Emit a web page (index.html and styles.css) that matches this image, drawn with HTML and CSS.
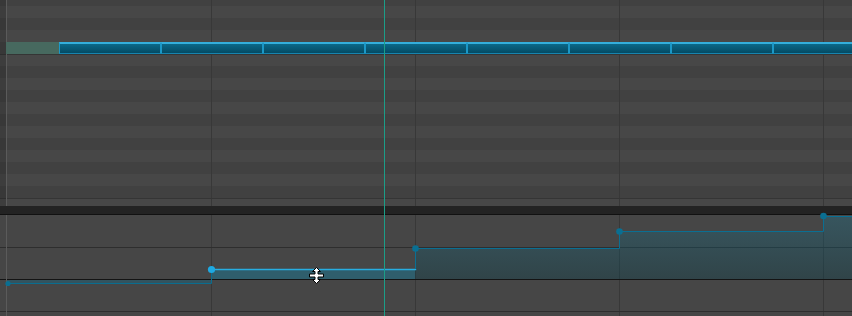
FILE: index.html
```html
<!DOCTYPE html>
<html lang="en">
<head>
    <meta charset="UTF-8">
    <meta name="viewport" content="width=device-width, initial-scale=1.0">
    <title>Piano roll</title>
    <link rel="stylesheet" href="styles.css">
</head>
<body>
    <div class="editor">
        <!-- note grid -->
        <div class="roll">
            <div class="notes">
                <div class="region"></div>
                <div class="note"></div>
                <div class="note"></div>
                <div class="note"></div>
                <div class="note"></div>
                <div class="note"></div>
                <div class="note"></div>
                <div class="note"></div>
                <div class="note"></div>
            </div>
        </div>

        <div class="divider"></div>

        <!-- automation lane -->
        <div class="lane">
            <svg width="852" height="101" viewBox="0 0 852 101">
                <defs>
                    <linearGradient id="fillGrad" x1="0" y1="0" x2="0" y2="64" gradientUnits="userSpaceOnUse">
                        <stop offset="0" stop-color="rgb(24,118,146)" stop-opacity="0.32"/>
                        <stop offset="1" stop-color="rgb(10,64,76)" stop-opacity="0.36"/>
                    </linearGradient>
                </defs>
                <rect x="7" y="65" width="204" height="3" fill="rgba(18,110,140,0.35)"/>
                <rect x="211" y="54" width="204" height="10" fill="rgba(20,124,156,0.45)"/>
                <path d="M415 33 H619 V16 H823 V1 H852 V64 H415 Z" fill="url(#fillGrad)"/>

                <path d="M7 68.5 H211.5 V55" fill="none" stroke="#0a6d8f" stroke-width="1"/>
                <path d="M211.5 54.5 H415.5 V54" fill="none" stroke="#27ade0" stroke-width="1.4"/>
                <path d="M415.5 54 V33.5 H619.5 V16.5 H823.5 V1.5 H852" fill="none" stroke="#0a6f93" stroke-width="1"/>

                <circle cx="8" cy="68.5" r="2.6" fill="#0a6f92"/>
                <circle cx="211.5" cy="54.5" r="3.6" fill="#1ea9e2"/>
                <circle cx="415.5" cy="33.5" r="3.3" fill="#0a6f92"/>
                <circle cx="619.5" cy="16.5" r="3.3" fill="#0a6f92"/>
                <circle cx="823.5" cy="1" r="3.3" fill="#0a6f92"/>
            </svg>
        </div>

        <div class="playhead"></div>

        <svg class="cursor" width="17" height="17" viewBox="0 0 17 17">
            <path d="M8.5 0.5 L12.5 4.5 L10 4.5 L10 7 L15.5 7 L15.5 10 L10 10 L10 12.5 L12.5 12.5 L8.5 16.5 L4.5 12.5 L7 12.5 L7 10 L1.5 10 L1.5 7 L7 7 L7 4.5 L4.5 4.5 Z" fill="#fff" stroke="#000" stroke-width="1"/>
        </svg>
    </div>
</body>
</html>
```

FILE: styles.css
```css
* {
    box-sizing: border-box;
    margin: 0;
    padding: 0;
}

body {
    font-family: "Liberation Sans", Arial, sans-serif;
    background-color: #464646;
    overflow: hidden;
}

.editor {
    position: relative;
    width: 852px;
    height: 316px;
    overflow: hidden;
}

.roll {
    height: 206px;
    padding-top: 42px;
    background:
        linear-gradient(90deg, rgba(0, 0, 0, 0.14) 0 6px, #5b5b5b 6px 7px, transparent 7px),
        linear-gradient(180deg, transparent 54px, #353535 54px 55px, transparent 55px 198px, #353535 198px 199px, transparent 199px),
        linear-gradient(90deg, transparent 211px, #383838 211px 212px, transparent 212px 415px, #383838 415px 416px, transparent 416px 619px, #383838 619px 620px, transparent 620px 823px, #383838 823px 824px, transparent 824px),
        repeating-linear-gradient(180deg, #414141 0 6px, #474747 6px 18px, #414141 18px 24px);
}

.notes {
    display: flex;
    height: 12px;
    overflow: hidden;
}

.region {
    flex: 0 0 53px;
    margin-left: 6px;
    background-color: #47695f;
}

.note {
    flex: 0 0 102px;
    height: 12px;
    border: 1px solid #1b97c6;
    border-top: 2px solid #34aedb;
    border-bottom-color: #1784ae;
    background: linear-gradient(180deg, #0b6888, #044a63);
}

.divider {
    height: 9px;
    background-color: #232323;
    border-bottom: 1px solid #111;
}

.lane {
    height: 101px;
    background:
        linear-gradient(90deg, transparent 6px, #5b5b5b 6px 7px, transparent 7px),
        linear-gradient(180deg, transparent 32px, #2e2e2e 32px 33px, transparent 33px 64px, #141414 64px 65px, transparent 65px 96px, #2e2e2e 96px 97px, transparent 97px),
        linear-gradient(90deg, transparent 211px, #383838 211px 212px, transparent 212px 415px, #383838 415px 416px, transparent 416px 619px, #383838 619px 620px, transparent 620px 823px, #383838 823px 824px, transparent 824px),
        #464646;
}

.lane svg {
    display: block;
    overflow: visible;
}

.playhead {
    position: absolute;
    top: 0;
    bottom: 0;
    left: 384px;
    width: 1px;
    background-color: #1b9e88;
}

.cursor {
    position: absolute;
    left: 308px;
    top: 267px;
}
```
